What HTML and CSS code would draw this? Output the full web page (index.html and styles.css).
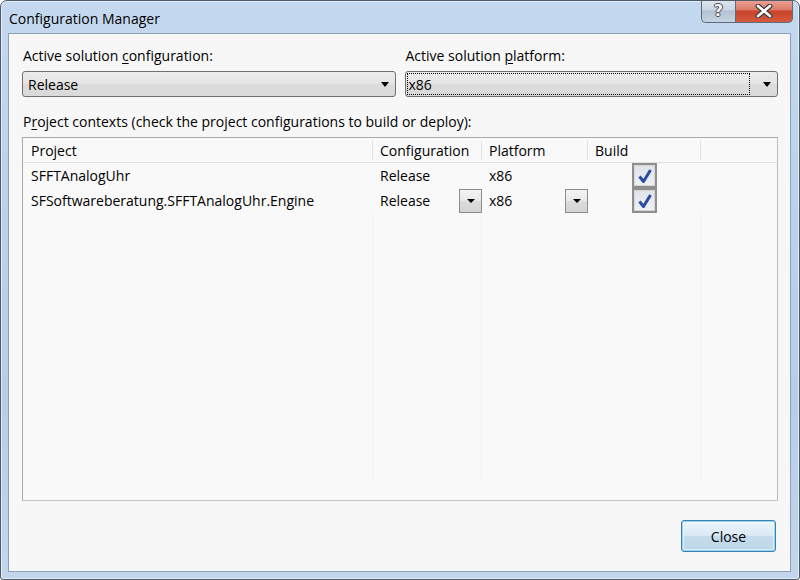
FILE: index.html
```html
<!DOCTYPE html>
<html>
<head>
<meta charset="utf-8">
<title>Configuration Manager</title>
<link rel="stylesheet" href="styles.css">
</head>
<body>
<div class="window">
  <div class="titlebar">
    <span class="title">Configuration Manager</span>
    <div class="caption-btns">
      <div class="cap cap-help"><span class="q">?</span></div>
      <div class="cap cap-close">
        <svg width="20" height="14" viewBox="0 0 20 14">
          <path d="M4 2 L16 12 M16 2 L4 12" stroke="#3b3b3b" stroke-width="5" stroke-linecap="round" fill="none"/>
          <path d="M4 2 L16 12 M16 2 L4 12" stroke="#ffffff" stroke-width="2.6" stroke-linecap="round" fill="none"/>
        </svg>
      </div>
    </div>
  </div>
  <div class="client">
    <div class="top-row">
      <div class="field">
        <div class="label">Active solution <u>c</u>onfiguration:</div>
        <div class="combo">
          <span class="combo-text">Release</span>
          <span class="arrow"></span>
        </div>
      </div>
      <div class="field">
        <div class="label">Active solution <u>p</u>latform:</div>
        <div class="combo">
          <span class="combo-text focus">x86</span>
          <span class="arrow"></span>
        </div>
      </div>
    </div>
    <div class="label ctx-label">P<u>r</u>oject contexts (check the project configurations to build or deploy):</div>
    <div class="grid">
      <div class="row head">
        <div class="cell">Project</div>
        <div class="cell">Configuration</div>
        <div class="cell">Platform</div>
        <div class="cell">Build</div>
        <div class="cell last"></div>
      </div>
      <div class="row">
        <div class="cell">SFFTAnalogUhr</div>
        <div class="cell">Release</div>
        <div class="cell">x86</div>
        <div class="cell center"><span class="check"><svg width="18" height="18" viewBox="0 0 18 18"><path d="M3.5 9.5 L7.5 14.5 L14.5 3" stroke="#2b4c9f" stroke-width="3" fill="none" stroke-linejoin="round"/></svg></span></div>
        <div class="cell last"></div>
      </div>
      <div class="row">
        <div class="cell">SFSoftwareberatung.SFFTAnalogUhr.Engine</div>
        <div class="cell has-drop">Release<span class="mini-drop"><span class="arrow"></span></span></div>
        <div class="cell has-drop">x86<span class="mini-drop"><span class="arrow"></span></span></div>
        <div class="cell center"><span class="check"><svg width="18" height="18" viewBox="0 0 18 18"><path d="M3.5 9.5 L7.5 14.5 L14.5 3" stroke="#2b4c9f" stroke-width="3" fill="none" stroke-linejoin="round"/></svg></span></div>
        <div class="cell last"></div>
      </div>
      <div class="filler">
        <div class="fcol"></div>
        <div class="fcol"></div>
        <div class="fcol nol"></div>
        <div class="fcol"></div>
        <div class="fcol last"></div>
      </div>
    </div>
    <div class="footer">
      <button class="btn">Close</button>
    </div>
  </div>
</div>
</body>
</html>
```
FILE: styles.css
```css
* { box-sizing: border-box; }
html, body { margin: 0; padding: 0; background: #ffffff; }
body {
  font-family: "Open Sans", "Noto Sans", sans-serif;
  font-size: 14px;
  color: #000;
}
.window {
  width: 800px;
  height: 580px;
  border: 1px solid #4f5b68;
  border-radius: 7px 7px 3px 3px;
  background: linear-gradient(180deg, #c4d9ef 0%, #bcd2ea 35%, #b8cee7 70%, #c2d6ec 100%);
  box-shadow: inset 0 0 0 1px rgba(255,255,255,0.55);
  display: flex;
  flex-direction: column;
  overflow: hidden;
}
.titlebar {
  height: 32px;
  display: flex;
  align-items: flex-start;
  padding-left: 8px;
  padding-right: 6px;
}
.title {
  font-size: 14px;
  line-height: 20px;
  margin-top: 8px;
  color: #000;
}
.caption-btns {
  margin-left: auto;
  display: flex;
  margin-top: -1px;
}
.cap {
  height: 23px;
  display: flex;
  align-items: center;
  justify-content: center;
  border: 1px solid #5d6b7b;
  border-top: none;
}
.cap-help {
  width: 34px;
  border-radius: 0 0 0 5px;
  background: linear-gradient(180deg, #dfe7ef 0%, #c9d5e2 45%, #b3c2d3 50%, #c6d3e1 100%);
  border-right: none;
}
.cap-help .q {
  font-family: "DejaVu Sans", sans-serif;
  font-weight: bold;
  font-size: 16px;
  color: #f4f6f8;
  text-shadow: -1px 0 #4a4a4a, 1px 0 #4a4a4a, 0 -1px #4a4a4a, 0 1px #4a4a4a;
  line-height: 1;
}
.cap-close {
  width: 58px;
  border-radius: 0 0 5px 0;
  background: linear-gradient(180deg, #e9a497 0%, #dd7a68 45%, #c8442b 50%, #d45a3d 100%);
}
.client {
  flex: 1;
  margin: 0 8px 7px 7px;
  border: 1px solid #8ca0b6;
  background: #f7f7f7;
  padding: 13px 12px 19px 13px;
  display: flex;
  flex-direction: column;
}
.label {
  line-height: 18px;
  height: 18px;
  white-space: nowrap;
  padding-left: 1px;
}
.label u { text-underline-offset: 2px; }
.top-row {
  display: grid;
  grid-template-columns: 1fr 1fr;
  column-gap: 9px;
}
.combo {
  margin-top: 6px;
  height: 26px;
  border: 1px solid #707070;
  border-radius: 3px;
  background: linear-gradient(180deg, #ececec 0%, #e4e4e4 50%, #dcdcdc 51%, #dadada 100%);
  display: flex;
  align-items: center;
  padding: 1px;
}
.combo-text {
  flex: 1;
  height: 22px;
  line-height: 21px;
  padding-left: 3px;
  border: 1px solid transparent;
}
.combo-text.focus {
  border: 1px dotted #000;
  margin-right: 1px;
  padding-left: 1px;
}
.arrow {
  display: inline-block;
  width: 0;
  height: 0;
  border-left: 4px solid transparent;
  border-right: 4px solid transparent;
  border-top: 5px solid #000;
}
.combo .arrow { margin: 0 5px 0 12px; }
.ctx-label { margin-top: 16px; }
.grid {
  margin-top: 6px;
  height: 364px;
  border: 1px solid #a9a9a9;
  border-right-color: #bdbdbd;
  border-bottom-color: #c4c4c4;
  background: #f9f9f9;
  display: flex;
  flex-direction: column;
}
.row {
  display: grid;
  grid-template-columns: 350px 109px 106px 113px 1fr;
  height: 25px;
}
.row .cell {
  display: flex;
  align-items: center;
  padding-left: 7px;
  white-space: nowrap;
  position: relative;
}
.row .cell:first-child { padding-left: 8px; }
.row.head { height: 25px; border-bottom: 1px solid #e2e2e2; }
.row.head .cell { border-right: 1px solid #e3e3e3; margin: 3px 0 3px 0; }
.row.head .cell.last { border-right: none; }
.cell.center { justify-content: center; padding-left: 0; }
.mini-drop {
  margin-left: auto;
  width: 23px;
  height: 24px;
  border: 1px solid #8c8c8c;
  background: linear-gradient(180deg, #f4f4f4 0%, #e8e8e8 50%, #dcdcdc 51%, #d4d4d4 100%);
  display: flex;
  align-items: center;
  justify-content: center;
}
.mini-drop .arrow { border-top-width: 4px; }
.check {
  width: 25px;
  height: 25px;
  border: 2px solid #8f8f8f;
  outline: 1px solid #d6d6d6;
  outline-offset: -3px;
  background: linear-gradient(180deg, #dfe3e8 0%, #eef1f5 100%);
  display: flex;
  align-items: center;
  justify-content: center;
}
.filler {
  flex: 1;
  display: grid;
  grid-template-columns: 350px 109px 106px 113px 1fr;
  padding-bottom: 20px;
}
.fcol { border-right: 1px solid #f0f3f6; }
.fcol.nol, .fcol.last { border-right: none; }
.footer {
  margin-top: 19px;
  display: flex;
  justify-content: flex-end;
  padding-right: 2px;
}
.btn {
  width: 95px;
  height: 32px;
  font-family: "Open Sans", "Noto Sans", sans-serif;
  font-size: 14px;
  color: #000;
  border: 1px solid #3c7fb1;
  border-radius: 3px;
  background: linear-gradient(180deg, #eaf4fb 0%, #dbeaf5 48%, #c5dcec 50%, #bcd6e9 100%);
  box-shadow: inset 0 0 0 1px #8fd5f3, inset 0 0 0 2px rgba(255,255,255,0.5);
  padding: 0;
}
```
